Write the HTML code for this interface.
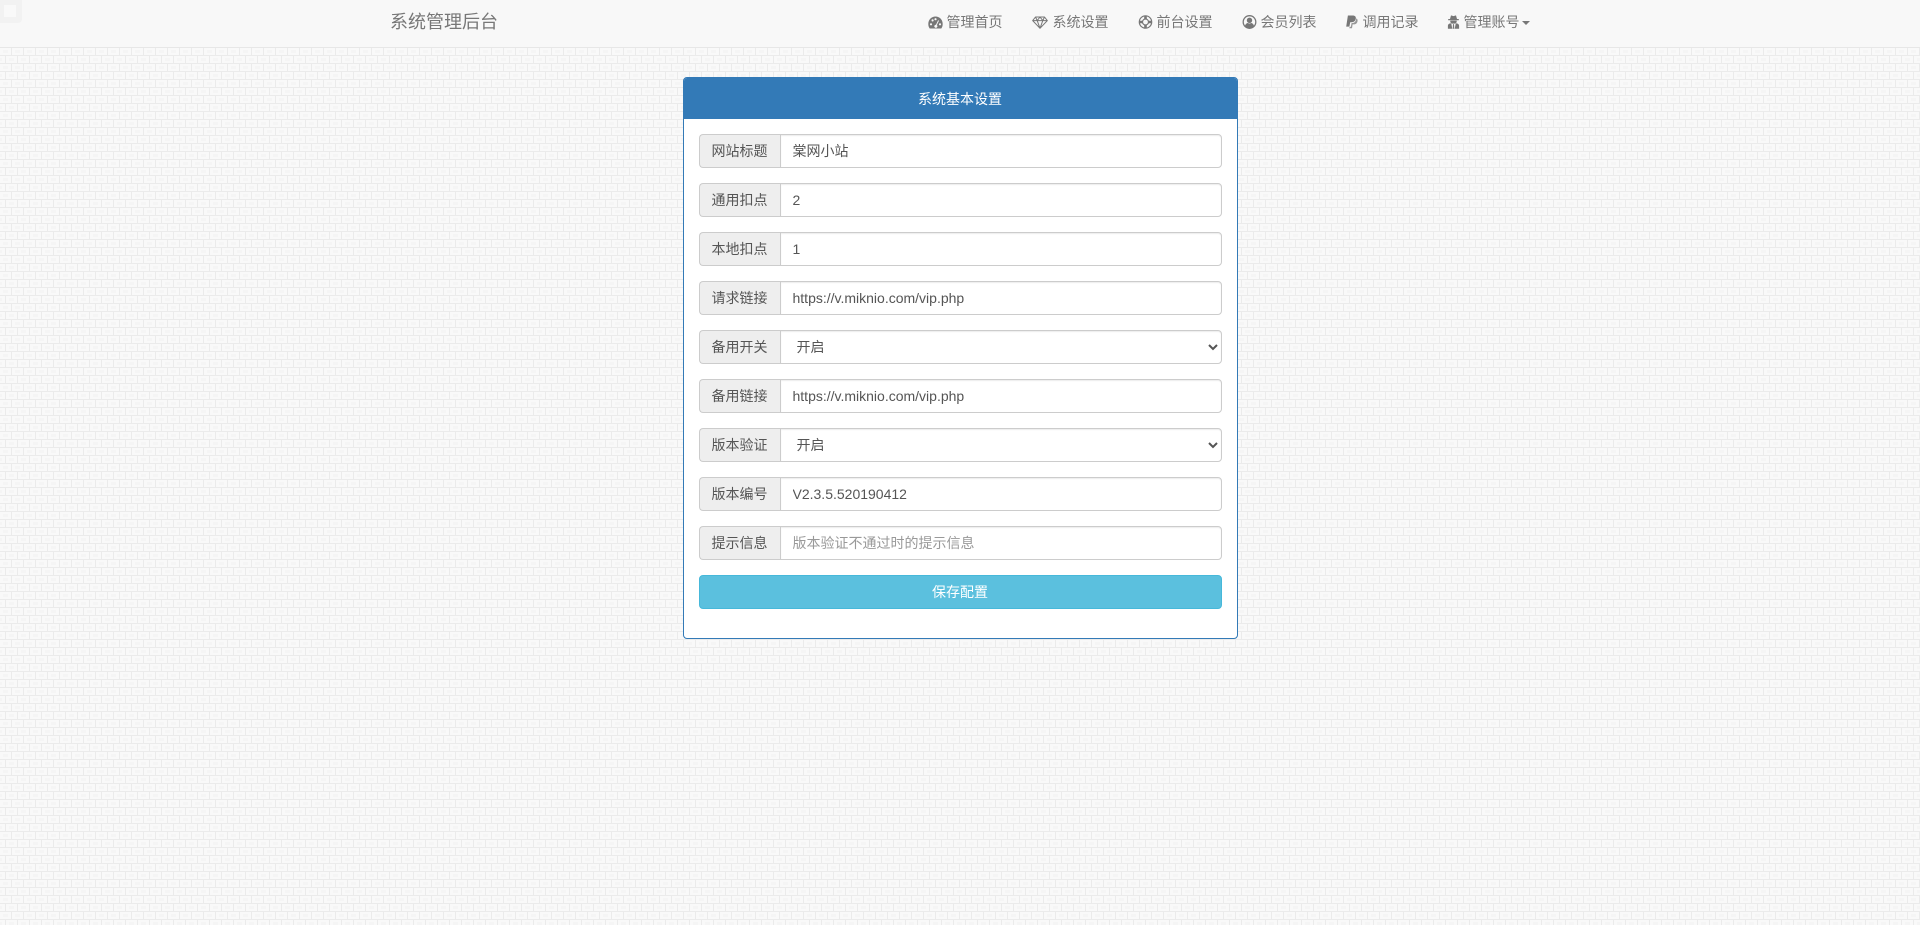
<!DOCTYPE html>
<html lang="zh-CN">
<head>
<meta charset="utf-8">
<title>系统基本设置</title>
<style>
*{box-sizing:border-box}
html,body{margin:0;padding:0;width:1920px;height:925px;overflow:hidden}
body{font:14px/20px "Liberation Sans","Noto Sans CJK SC",sans-serif;color:#333;background:#f7f7f7;position:relative}
#bg{position:absolute;left:0;top:0;width:1920px;height:925px}
.nav{position:absolute;left:0;top:0;width:1920px;height:48px;background:#f8f8f8;border-bottom:1px solid #e7e7e7}
.brand{position:absolute;left:390px;top:12px;font-size:18px;line-height:20px;color:#777;white-space:nowrap}
.nt{position:absolute;top:12px;color:#777;white-space:nowrap;line-height:20px}
.nav svg{position:absolute;fill:#777}
.caret{position:absolute;left:1522px;top:21px;width:0;height:0;border-top:4px solid #777;border-left:4px solid transparent;border-right:4px solid transparent}
.tl{position:absolute;left:0;top:0;width:22px;height:23px;background:#f2f2f2;border-bottom-right-radius:4px}
.tl i{position:absolute;left:4px;top:5px;width:12px;height:12px;background:#f9f9f9}
.panel{position:absolute;left:682.5px;top:77px;width:555px;height:562px;background:#fff;border:1px solid #337ab7;border-radius:4px}
.ph{height:41px;background:#337ab7;color:#fff;text-align:center;line-height:42px;margin:0;border-radius:3px 3px 0 0}
.pb{padding:15px}
.ig{display:flex;height:34px;margin-bottom:15px}
.ad{width:81px;flex:none;height:34px;background:#eee;border:1px solid #ccc;border-right:0;border-radius:4px 0 0 4px;color:#555;text-align:center;line-height:32px;white-space:nowrap}
.fc{flex:1;min-width:0;height:34px;padding:6px 12px;font:14px/20px "Liberation Sans","Noto Sans CJK SC",sans-serif;color:#555;background:#fff;border:1px solid #ccc;border-radius:0 4px 4px 0;box-shadow:inset 0 1px 1px rgba(0,0,0,.075);outline:0}
select.fc{padding:6px 12px}
.fc::placeholder{color:#999;opacity:1}
.btn{display:block;width:100%;height:34px;background:#5bc0de;border:1px solid #46b8da;border-radius:4px;color:#fff;font:14px/20px "Liberation Sans","Noto Sans CJK SC",sans-serif;text-align:center;padding:6px 12px}
</style>
</head>
<body>
<svg id="bg" xmlns="http://www.w3.org/2000/svg" width="1920" height="925">
<defs>
<pattern id="b" width="12" height="16" patternUnits="userSpaceOnUse">
<rect width="12" height="16" fill="#f9f9f9"/>
<rect x="0" y="7" width="12" height="1" fill="#ebebeb"/>
<rect x="0" y="15" width="12" height="1" fill="#ebebeb"/>
<rect x="11" y="0" width="1" height="7" fill="#ebebeb"/>
<rect x="5" y="8" width="1" height="7" fill="#ebebeb"/>
<rect x="3" y="2" width="5" height="3" fill="#f5f5f5"/>
<rect x="9" y="10" width="3" height="3" fill="#f5f5f5"/>
<rect x="0" y="10" width="2" height="3" fill="#f5f5f5"/>
</pattern>
</defs>
<rect width="1920" height="925" fill="url(#b)"/>
</svg>

<div class="nav">
  <div class="tl"><i></i></div>
  <div class="brand">系统管理后台</div>

  <svg style="left:928px;top:16px" width="15" height="13" viewBox="0 0 15 13"><path fill-rule="evenodd" d="M7.500 0.500C3.400 0.500 0.300 3.800 0.300 8c0 1.800.5 3.300 1.400 4.500h11.600c.9-1.200 1.400-2.700 1.400-4.500 0-4.200-3.100-7.500-7.200-7.500zM3 7.200a1.100 1.100 0 1 1 0 2.200 1.100 1.100 0 0 1 0-2.200zM4.600 3.300a1.100 1.100 0 1 1 0 2.200 1.100 1.100 0 0 1 0-2.200zM7.500 2.100a1.100 1.100 0 1 1 0 2.200 1.100 1.100 0 0 1 0-2.200zM12 7.200a1.100 1.100 0 1 1 0 2.200 1.100 1.100 0 0 1 0-2.200zM10.100 4.300l.9.500-2.200 4.300a1.500 1.500 0 1 1-2 .1 1.500 1.500 0 0 1 1.200-.4z"/></svg>
  <div class="nt" style="left:946.5px">管理首页</div>

  <svg style="left:1032px;top:16px" width="16" height="13" viewBox="0 0 16 13"><path fill="none" stroke="#777" stroke-width="1" stroke-linejoin="round" d="M3.500 1h9L15.300 4.600 8 12.300.7 4.600zM.7 4.600h14.600M5.200 4.600L8 12.300l2.800-7.700M3.500 1l1.700 3.600L8 1l2.800 3.600L12.500 1"/></svg>
  <div class="nt" style="left:1052.5px">系统设置</div>

  <svg style="left:1138px;top:15px" width="15" height="14" viewBox="0 0 15 14"><circle cx="7.500" cy="7" r="6.200" fill="none" stroke="#777" stroke-width="1.200"/><circle cx="7.500" cy="7" r="3" fill="none" stroke="#777" stroke-width="1.200"/><path fill="none" stroke="#777" stroke-width="2.600" d="M7.500 1v3M7.500 10v3M1.500 7h3M10.500 7h3"/></svg>
  <div class="nt" style="left:1156.5px">前台设置</div>

  <svg style="left:1242px;top:15px" width="15" height="14" viewBox="0 0 15 14"><circle cx="7.500" cy="7" r="6.300" fill="none" stroke="#777" stroke-width="1.300"/><circle cx="7.500" cy="5.300" r="2.700"/><path d="M2.900 11.300c.4-2.300 1.900-3.300 3-3.300.5.300 1 .5 1.600.5s1.100-.2 1.600-.5c1.100 0 2.600 1 3 3.300-1.200 1.200-2.800 1.900-4.600 1.900s-3.400-.7-4.600-1.900z"/></svg>
  <div class="nt" style="left:1260.5px">会员列表</div>

  <svg style="left:1346px;top:15px" width="12" height="14" viewBox="0 0 12 14"><path d="M1.900.5h4.700c2.400 0 3.600 1.300 3.200 3.300-.5 2.400-2.100 3.400-4.200 3.400H4.200L3.400 11.600H.2z"/><path opacity=".75" d="M10.300 3.400c1.200.6 1.500 1.700 1.200 3-.4 2-1.800 3-3.800 3H6.600L6 13.200H3.300l.3-1.300h1.200l.8-3.900h.7c2.300 0 3.500-1.400 4-4.600z"/></svg>
  <div class="nt" style="left:1362.5px">调用记录</div>

  <svg style="left:1447px;top:15px" width="13" height="14" viewBox="0 0 13 14"><path fill-rule="evenodd" d="M4 .4L6.500 1.100 9 .4 10 4H11.800V5.200H1.200V4H3zM3.300 5.600h6.400c.2 1.200-.3 2.500-1.400 3h-3.600c-1.100-.5-1.600-1.800-1.400-3zM3.300 8.200l1 .6L5.300 13.700H.9V10.600C.9 9.400 2.100 8.500 3.300 8.200zM9.700 8.200C10.900 8.500 12.100 9.400 12.100 10.600V13.700H7.700L8.700 8.800zM6 9.100H7L7.300 13.700H5.700z"/></svg>
  <div class="nt" style="left:1463.5px">管理账号</div>
  <span class="caret"></span>
</div>

<div class="panel">
  <div class="ph">系统基本设置</div>
  <div class="pb">
    <div class="ig"><span class="ad">网站标题</span><input class="fc" type="text" value="棠网小站"></div>
    <div class="ig"><span class="ad">通用扣点</span><input class="fc" type="text" value="2"></div>
    <div class="ig"><span class="ad">本地扣点</span><input class="fc" type="text" value="1"></div>
    <div class="ig"><span class="ad">请求链接</span><input class="fc" type="text" value="https://v.miknio.com/vip.php"></div>
    <div class="ig"><span class="ad">备用开关</span><select class="fc"><option>开启</option><option>关闭</option></select></div>
    <div class="ig"><span class="ad">备用链接</span><input class="fc" type="text" value="https://v.miknio.com/vip.php"></div>
    <div class="ig"><span class="ad">版本验证</span><select class="fc"><option>开启</option><option>关闭</option></select></div>
    <div class="ig"><span class="ad">版本编号</span><input class="fc" type="text" value="V2.3.5.520190412"></div>
    <div class="ig"><span class="ad">提示信息</span><input class="fc" type="text" placeholder="版本验证不通过时的提示信息"></div>
    <button class="btn" type="button">保存配置</button>
  </div>
</div>
</body>
</html>
